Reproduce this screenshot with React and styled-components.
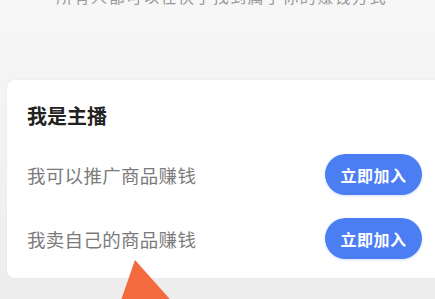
import React from "react";
import styled, { createGlobalStyle } from "styled-components";

const Global = createGlobalStyle`
  html, body { margin: 0; padding: 0; }
  body {
    background: #f1f1f1;
    font-family: "Noto Sans CJK SC", "Noto Sans", sans-serif;
  }
`;

const Page = styled.div`
  position: relative;
  width: 435px;
  height: 299px;
  overflow: hidden;
  background: linear-gradient(180deg, #f7f7f7 0%, #f1f1f1 60%, #ededed 100%);
  display: flex;
  flex-direction: column;
`;

const Subtitle = styled.div`
  margin-top: -15px;
  padding-left: 8px;
  text-align: center;
  font-size: 16px;
  line-height: 22px;
  letter-spacing: 1.4px;
  color: #9a9a9a;
`;

const Card = styled.div`
  margin: 73px -8px 0 7px;
  padding: 22px 21px 19px 20px;
  background: #ffffff;
  border-radius: 8px;
  box-shadow: 0 0 3px rgba(0, 0, 0, 0.05);
  display: flex;
  flex-direction: column;
`;

const Title = styled.h2`
  margin: 0 0 24px;
  font-size: 20px;
  line-height: 28px;
  font-weight: 700;
  color: #222222;
`;

const Row = styled.div`
  display: flex;
  align-items: center;
  justify-content: space-between;
  height: 41px;
  & + & {
    margin-top: 23px;
  }
`;

const RowText = styled.span`
  font-size: 18.5px;
  color: #7a7a7a;
  letter-spacing: 0.3px;
`;

const JoinButton = styled.button`
  width: 97px;
  height: 41px;
  border: none;
  border-radius: 21px;
  background: #4a7ef2;
  color: #ffffff;
  font-family: inherit;
  font-size: 16px;
  font-weight: 700;
  letter-spacing: 0.5px;
  padding: 0;
  box-shadow: 0 1px 3px rgba(74, 126, 242, 0.25);
`;

const Pointer = styled.svg`
  position: absolute;
  left: 110px;
  top: 258px;
`;

const rows = ["我可以推广商品赚钱", "我卖自己的商品赚钱"];

export default function App() {
  return (
    <Page>
      <Global />
      <Subtitle>所有人都可以在快手找到属于你的赚钱方式</Subtitle>
      <Card>
        <Title>我是主播</Title>
        {rows.map((t) => (
          <Row key={t}>
            <RowText>{t}</RowText>
            <JoinButton>立即加入</JoinButton>
          </Row>
        ))}
      </Card>
      <Pointer width="80" height="50" viewBox="0 0 80 50">
        <polygon points="25,2 9,48 66,48" fill="#f36a3e" />
      </Pointer>
    </Page>
  );
}
